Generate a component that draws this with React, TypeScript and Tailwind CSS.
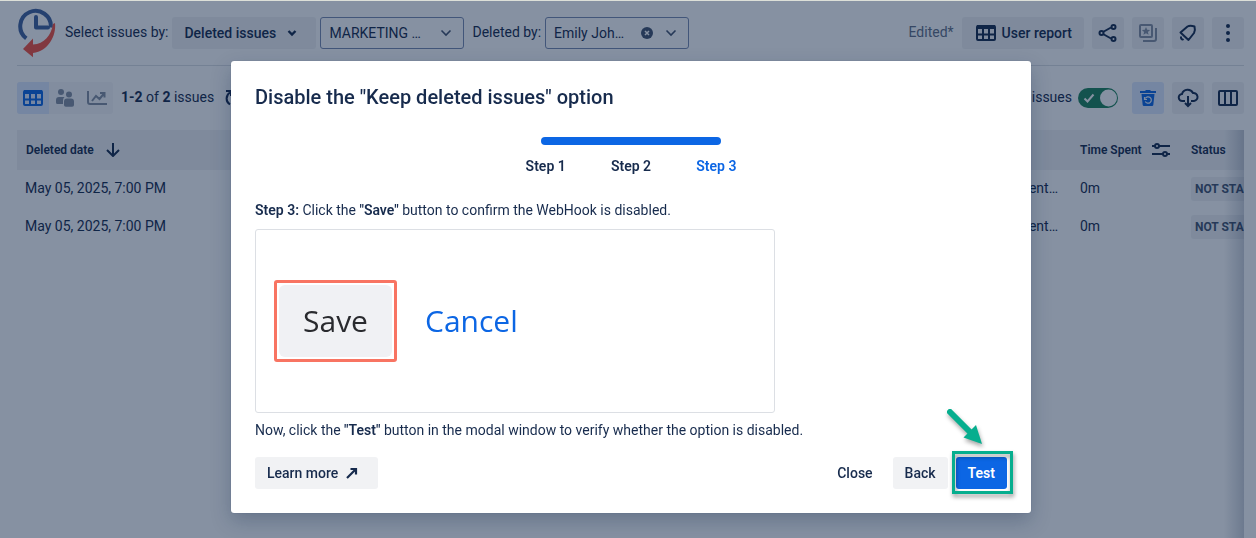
import React from 'react'

const iconButton = 'flex h-8 w-8 items-center justify-center rounded-[3px] bg-[#091E420F]'

const Logo = () => (
  <svg width="40" height="50" viewBox="0 0 40 50" fill="none" aria-label="Issue History">
    <path d="M9.3 30.4A15.3 15.3 0 1 1 33.8 19.5" stroke="#42639D" strokeWidth="4" />
    <path d="M19 9v10.4h12" stroke="#42639D" strokeWidth="4" strokeLinejoin="round" strokeLinecap="round" />
    <path d="M38 15C39.5 28 31 43.5 16 45v4.2L6 41l10-10.5V36.5C27 36 34.5 27 36 16z" fill="#F55240" />
  </svg>
)

const GridIcon = () => (
  <svg width="20" height="16" viewBox="0 0 20 16" fill="none" stroke="currentColor" strokeWidth="2">
    <rect x="1" y="1" width="18" height="14" rx="1" />
    <path d="M1 2h18" strokeWidth="4" />
    <path d="M1 9.5h18M7 3v12M13 3v12" />
  </svg>
)

const PeopleIcon = () => (
  <svg width="20" height="20" viewBox="0 0 20 20" fill="currentColor">
    <circle cx="6" cy="4" r="3" />
    <circle cx="14" cy="6.5" r="3" />
    <path d="M1 12a3 3 0 0 1 3-3h5.5a5 5 0 0 0-1.500 4v3H2.500A1.500 1.500 0 0 1 1 14.500z" />
    <path d="M9 13.500a3 3 0 0 1 3-3h4a3 3 0 0 1 3 3V17a1.800 1.800 0 0 1-1.800 1.800h-6.400A1.800 1.800 0 0 1 9 17z" />
  </svg>
)

const TrendIcon = () => (
  <svg width="20" height="16" viewBox="0 0 20 16" fill="none" stroke="currentColor" strokeWidth="2">
    <path d="M1 1v11a2 2 0 0 0 2 2h17" />
    <path d="M5 11l4-5 3.500 3L17 3.500M13 3h4.500v4.500" />
  </svg>
)

const RefreshIcon = () => (
  <svg width="20" height="18" viewBox="0 0 20 18" fill="none" stroke="currentColor" strokeWidth="2">
    <path d="M8 15.500A7 7 0 0 1 8 3.500M4 2h5v5M13 15.500A7 7 0 0 0 13 3.500" />
  </svg>
)

const Chevron = ({ bold = false }: { bold?: boolean }) => (
  <svg width="12" height="8" viewBox="0 0 12 8" fill="none" stroke="currentColor" strokeWidth={bold ? 2.4 : 1.6}>
    {bold ? <path d="M2.500 2l3.500 3.500L9.500 2" /> : <path d="M1.500 1.500L6 6l4.500-4.500" />}
  </svg>
)

const ShareIcon = () => (
  <svg width="20" height="20" viewBox="0 0 20 20" fill="none" stroke="currentColor" strokeWidth="2">
    <path d="M5 9l8-4.500M5 11l8 4.500" />
    <circle cx="3.500" cy="10" r="2" />
    <circle cx="15.500" cy="4" r="2" />
    <circle cx="15.500" cy="16" r="2" />
  </svg>
)

const FavoriteIcon = () => (
  <svg width="20" height="20" viewBox="0 0 20 20" fill="none" stroke="currentColor" strokeWidth="2">
    <rect x="2" y="2" width="12" height="12" rx="1" />
    <path d="M18 5v11a2 2 0 0 1-2 2H5" />
    <path d="M8 4l1.200 2.700 2.900.3-2.200 1.900.7 2.900L8 10.300l-2.600 1.500.7-2.900L3.900 7l2.900-.3z" fill="currentColor" stroke="none" />
  </svg>
)

const FeedbackIcon = () => (
  <svg width="20" height="20" viewBox="0 0 20 20" fill="none" stroke="currentColor" strokeWidth="2" strokeLinejoin="round">
    <path d="M2.500 9.500L9.500 3.500Q12 2 16.500 3.500Q17.500 7 16 10L10.500 17z" />
    <path d="M3 13.500v1.500a1.500 1.500 0 0 0 2.500 1" />
  </svg>
)

const MoreIcon = () => (
  <svg width="20" height="20" viewBox="0 0 20 20" fill="currentColor">
    <circle cx="10" cy="3" r="2" />
    <circle cx="10" cy="10" r="2" />
    <circle cx="10" cy="17" r="2" />
  </svg>
)

const TrashIcon = () => (
  <svg width="18" height="18" viewBox="0 0 18 18" fill="currentColor">
    <path d="M1 2h5l1-1h4l1 1h5v2H1zM2.500 5h13l-1.200 11a1.200 1.200 0 0 1-1.200 1H4.900a1.200 1.200 0 0 1-1.200-1z" />
    <path d="M6.300 9.500a3.200 3.200 0 1 1 0 3M5.500 8v2.500h2.500" fill="none" stroke="#E9F2FF" strokeWidth="1.200" />
  </svg>
)

const CloudIcon = () => (
  <svg width="22" height="20" viewBox="0 0 22 20" fill="none" stroke="currentColor" strokeWidth="2">
    <path d="M8 13H5.500a3.500 3.500 0 0 1-.5-7 6 6 0 0 1 11-1 4 4 0 0 1 1 8H14" />
    <path d="M11 8v10M8 15l3 3 3-3" />
  </svg>
)

const ColumnsIcon = () => (
  <svg width="20" height="16" viewBox="0 0 20 16" fill="none" stroke="currentColor" strokeWidth="2">
    <rect x="1" y="1" width="18" height="14" rx="1" />
    <path d="M7 1v14M13 1v14" />
  </svg>
)

const SlidersIcon = () => (
  <svg width="18" height="14" viewBox="0 0 18 14" fill="none" stroke="currentColor" strokeWidth="2">
    <path d="M0 3h3M7 3h11M0 11h11M15 11h3" />
    <circle cx="5" cy="3" r="2" />
    <circle cx="13" cy="11" r="2" />
  </svg>
)

const SortIcon = () => (
  <svg width="14" height="14" viewBox="0 0 14 14" fill="none" stroke="currentColor" strokeWidth="2">
    <path d="M7 0v13M1 7l6 6 6-6" />
  </svg>
)

const ExternalIcon = () => (
  <svg width="12" height="12" viewBox="0 0 12 12" fill="none" stroke="currentColor" strokeWidth="2.200">
    <path d="M1 11l8.500-8.500M4.500 2h5.500v5.500" />
  </svg>
)

const Picker = ({ id, value, clearable = false }: { id: string; value: string; clearable?: boolean }) => (
  <div className="relative">
    <select
      id={id}
      aria-label={id}
      className="h-8 w-36 appearance-none rounded-[3px] border border-[#7A8BB0] bg-transparent pl-2 text-sm"
    >
      <option>{value}</option>
    </select>
    <span className="pointer-events-none absolute top-0 right-3 flex h-8 items-center gap-3 text-[#44546F]">
      {clearable && (
        <svg width="12" height="12" viewBox="0 0 12 12">
          <circle cx="6" cy="6" r="6" fill="currentColor" />
          <path d="M4 4l4 4M8 4l-4 4" stroke="#fff" strokeWidth="1.500" />
        </svg>
      )}
      <Chevron />
    </span>
  </div>
)

const Header = () => (
  <header className="flex h-[65px] items-center justify-between border-b border-[#091E4224]">
    <div className="flex items-center gap-1">
      <Logo />
      <label htmlFor="select-by" className="ml-1 pb-0.5">Select issues by:</label>
      <button
        id="select-by"
        className="flex h-8 w-36 items-center justify-between rounded-[3px] bg-[#091E420F] pr-[18px] pl-3 font-medium"
      >
        Deleted issues
        <Chevron bold />
      </button>
      <Picker id="project" value="MARKETING …" />
      <label htmlFor="deleted-by" className="ml-1 pb-0.5">Deleted by:</label>
      <Picker id="deleted-by" value="Emily Joh…" clearable />
    </div>

    <div className="flex items-center gap-2">
      <span className="pb-0.5 text-[#626F86]">Edited*</span>
      <button className="flex h-8 items-center gap-1.5 rounded-[3px] bg-[#091E420F] pr-3 pl-3.5 font-medium">
        <GridIcon />
        User report
      </button>
      <button className={iconButton} aria-label="Share"><ShareIcon /></button>
      <button className={`${iconButton} text-[#8590A2]`} aria-label="Save report"><FavoriteIcon /></button>
      <button className={iconButton} aria-label="Feedback"><FeedbackIcon /></button>
      <button className={iconButton} aria-label="More"><MoreIcon /></button>
    </div>
  </header>
)

const Toolbar = () => (
  <div className="flex items-center justify-between py-4">
    <div className="flex items-center gap-2">
      <div className="flex rounded-[3px] bg-[#091E4208] text-[#8590A2]">
        <button className="flex h-8 w-8 items-center justify-center rounded-l-[3px] bg-[#DDE9FF] text-[#0C66E4]" aria-label="Table">
          <GridIcon />
        </button>
        <button className="flex h-8 w-8 items-center justify-center" aria-label="Users"><PeopleIcon /></button>
        <button className="flex h-8 w-8 items-center justify-center" aria-label="Chart"><TrendIcon /></button>
      </div>
      <p className="pb-0.5">
        <b>1-2</b> of <b>2</b> issues
      </p>
      <RefreshIcon />
    </div>

    <div className="flex items-center gap-2">
      <div className="flex items-center gap-1.5">
        <label htmlFor="show-issues" className="pb-0.5">issues</label>
        <span className="relative flex h-5 w-10">
          <input
            id="show-issues"
            type="checkbox"
            defaultChecked
            className="h-5 w-10 appearance-none rounded-full bg-[#8590A2] checked:bg-[#1F845A]"
          />
          <svg className="pointer-events-none absolute inset-0" width="40" height="20" viewBox="0 0 40 20">
            <path d="M6.500 10.500l3 3 6-7" fill="none" stroke="#fff" strokeWidth="2" />
            <circle cx="30.500" cy="10" r="8.500" fill="#fff" />
          </svg>
        </span>
      </div>
      <button className="ml-1.5 flex h-8 w-8 items-center justify-center rounded-[3px] bg-[#DDE9FF] text-[#0C66E4]" aria-label="Restore">
        <TrashIcon />
      </button>
      <button className={iconButton} aria-label="Export"><CloudIcon /></button>
      <button className={iconButton} aria-label="Columns"><ColumnsIcon /></button>
    </div>
  </div>
)

const IssueTable = () => (
  <div className="relative grow overflow-hidden">
    <table className="w-full table-fixed text-left">
      <thead className="bg-[#091E420F] text-xs">
        <tr className="h-10">
          <th className="w-40 pl-[9px] font-semibold">
            <span className="flex items-center gap-3">
              Deleted date
              <SortIcon />
            </span>
          </th>
          <th />
          <th className="w-[115px] pl-1 font-semibold">
            <span className="flex items-center gap-2.5">
              Time Spent
              <SlidersIcon />
            </span>
          </th>
          <th className="w-[53px] font-semibold">Status</th>
        </tr>
      </thead>
      <tbody>
        {[1, 2].map((row) => (
          <tr key={row} className="h-[38px]">
            <td className="pb-0.5 pl-2 whitespace-nowrap">May 05, 2025, 7:00 PM</td>
            <td className="pr-[18px] pb-0.5 text-right">ent…</td>
            <td className="pb-0.5 pl-1">0m</td>
            <td className="overflow-hidden">
              <span className="flex h-6 w-24 items-center rounded-[3px] bg-[#091E420F] px-1 text-xs font-bold whitespace-nowrap text-[#44546F]">
                NOT STARTED
              </span>
            </td>
          </tr>
        ))}
      </tbody>
    </table>
    <div className="pointer-events-none absolute inset-y-0 right-0 w-5 bg-linear-to-r from-transparent to-[#091E4233]" />
  </div>
)

const StepProgress = () => (
  <div className="mt-7 flex flex-col items-center">
    <div className="h-2 w-[180px] rounded-full bg-[#0C66E4]" />
    <ol className="mt-[11px] grid w-64 grid-cols-3 text-center font-semibold">
      <li>Step 1</li>
      <li>Step 2</li>
      <li className="text-[#0C66E4]">Step 3</li>
    </ol>
  </div>
)

const SavePreview = () => (
  <div className="mt-[9px] flex h-[184px] w-full max-w-[520px] items-center gap-4 rounded-[3px] border border-[#DCDFE4] pl-[18px] font-['Open_Sans',sans-serif] text-[30px]">
    <div className="rounded-[3px] border-3 border-[#F87462] p-0.5">
      <button className="h-[72px] w-[113px] rounded-md bg-[#F0F1F4] text-[#292A2E]">Save</button>
    </div>
    <button className="px-3 text-[#0C66E4]">Cancel</button>
  </div>
)

const TestPointer = () => (
  <>
    <svg
      className="pointer-events-none absolute -top-[52px] -left-3 drop-shadow-[1px_3px_2px_rgba(0,0,0,0.35)]"
      width="44"
      height="44"
      viewBox="0 0 44 44"
    >
      <path d="M6 7l20 20" stroke="#06AE8E" strokeWidth="6" strokeLinecap="round" />
      <path d="M38 39L32 20 19.500 32.500z" fill="#06AE8E" />
    </svg>
    <span className="pointer-events-none absolute -top-1.5 -right-1.5 -bottom-[5px] -left-1 border-3 border-[#06AE8E] drop-shadow-[1px_3px_2px_rgba(0,0,0,0.4)]" />
  </>
)

const Modal = () => (
  <div
    role="dialog"
    aria-labelledby="modal-title"
    className="w-full max-w-[800px] rounded-[3px] bg-white p-6 shadow-[0_8px_20px_#091E4240,0_0_1px_#091E424F]"
  >
    <h1 id="modal-title" className="text-xl leading-6 font-medium">
      Disable the "Keep deleted issues" option
    </h1>
    <StepProgress />

    <p className="mt-6">
      <b className="font-semibold">Step 3:</b> Click the <b className="font-semibold">"Save"</b> button to confirm the
      WebHook is disabled.
    </p>
    <SavePreview />
    <p className="mt-[7px]">
      Now, click the <b className="font-semibold">"Test"</b> button in the modal window to verify whether the option is
      disabled.
    </p>

    <div className="mt-[17px] flex items-center justify-between font-medium">
      <a href="#" className="flex h-8 items-center gap-2 rounded-[3px] bg-[#F1F2F4] pr-5 pl-3">
        Learn more
        <ExternalIcon />
      </a>
      <div className="flex gap-2">
        <button className="h-8 px-3">Close</button>
        <button className="h-8 rounded-[3px] bg-[#F1F2F4] px-3">Back</button>
        <div className="relative">
          <button className="h-8 rounded-[3px] bg-[#0C66E4] px-3 font-semibold text-white">Test</button>
          <TestPointer />
        </div>
      </div>
    </div>
  </div>
)

export default function App() {
  return (
    <div className="min-h-screen border-t border-[#DCDFD8] bg-white font-[Roboto,sans-serif] text-sm text-[#172B4D]">
      <main className="flex min-h-[calc(100vh-1px)] flex-col pr-3 pl-[17px]">
        <Header />
        <Toolbar />
        <IssueTable />
      </main>

      <div className="fixed inset-0 top-px flex items-start justify-center bg-[#091E427D] pt-[60px] pl-1.5">
        <Modal />
      </div>
    </div>
  )
}
